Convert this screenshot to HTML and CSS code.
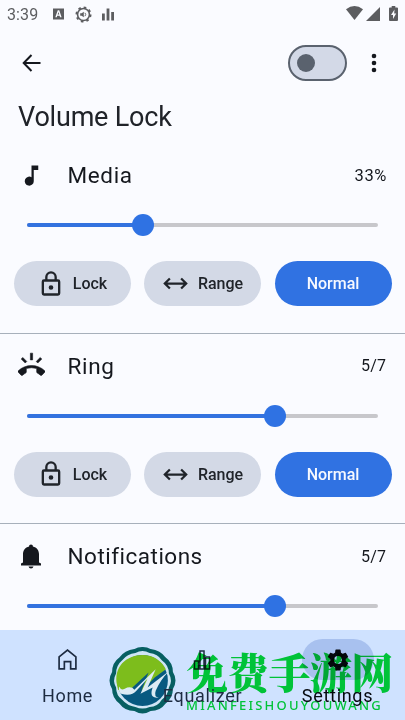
FILE: index.html
```html
<!DOCTYPE html>
<html lang="en">
<head>
<meta charset="utf-8">
<title>Volume Lock</title>
<link rel="stylesheet" href="styles.css">
</head>
<body>
<svg class="defs" aria-hidden="true">
  <symbol id="lock" viewBox="0 0 24 24"><path d="M18 8h-1V6A5 5 0 0 0 7 6v2H6a2 2 0 0 0-2 2v10a2 2 0 0 0 2 2h12a2 2 0 0 0 2-2V10a2 2 0 0 0-2-2zM9 6a3 3 0 0 1 6 0v2H9zm9 14H6V10h12zm-6-3a2 2 0 1 0 0-4 2 2 0 0 0 0 4z"/></symbol>
  <symbol id="range" viewBox="0 0 24 24"><path d="M3 12h18M7 7.500 2.500 12 7 16.500M17 7.500l4.500 4.500-4.500 4.500" fill="none" stroke="currentColor" stroke-width="2"/></symbol>
  <symbol id="gear" viewBox="0 0 24 24"><path d="M19.140 12.940c.040-.300.060-.610.060-.940s-.020-.640-.070-.940l2.030-1.580a.490.490 0 0 0 .120-.610l-1.920-3.320a.490.490 0 0 0-.590-.220l-2.390.960a7 7 0 0 0-1.620-.940l-.360-2.540a.480.480 0 0 0-.480-.410h-3.840a.470.470 0 0 0-.470.410l-.360 2.540a7.400 7.400 0 0 0-1.620.940l-2.390-.960a.480.480 0 0 0-.590.220L2.740 8.870a.470.470 0 0 0 .120.610l2.030 1.580a6 6 0 0 0 0 1.880l-2.030 1.580a.490.490 0 0 0-.120.610l1.920 3.320c.120.220.370.290.590.220l2.390-.960c.500.380 1.030.700 1.620.940l.360 2.540c.050.240.240.410.480.410h3.840c.240 0 .440-.170.470-.410l.360-2.540a7.400 7.400 0 0 0 1.620-.940l2.390.960c.220.080.470 0 .590-.220l1.920-3.320a.470.470 0 0 0-.120-.610zM12 15.600a3.600 3.600 0 1 1 0-7.200 3.600 3.600 0 0 1 0 7.200z"/></symbol>
</svg>

<header class="status">
  <span class="time">3:39</span>
  <svg class="app-a" viewBox="0 0 12 12"><path fill-rule="evenodd" d="M0 0h12v12H0zM5.200 2 2.500 9.500h1.700l.4-1.500h2.600l.5 1.500h1.700L6.800 2zM6 3.800l.8 2.700H5.100z"/></svg>
  <svg class="app-gear" viewBox="0 0 18 18"><circle cx="9" cy="9" r="6.300" fill="none" stroke="currentColor" stroke-width="1.700"/><circle cx="9" cy="9" r="7.500" fill="none" stroke="currentColor" stroke-width="2" stroke-dasharray="2.700 3.190"/><path d="M5.500 7.700h1.600L9.300 6v6L7.100 10.300H5.500z"/><path d="M10.500 7.200q1.700 1.800 0 3.600" fill="none" stroke="currentColor"/></svg>
  <svg class="app-bars" viewBox="0 0 12 12"><path d="M0 5h2.800v7H0zM4.600 0h2.800v12H4.600zM9.200 3.500H12V12H9.200z"/></svg>
  <span class="spacer"></span>
  <svg class="wifi" viewBox="0 0 17 14"><path d="M0 3.200Q8.500-3 17 3.200L8.500 14z"/></svg>
  <svg class="signal" viewBox="0 0 14 14"><path d="M14 0v14H0z"/></svg>
  <svg class="battery" viewBox="0 0 9 15"><path fill-rule="evenodd" d="M2.700 0h3.600v1.500H8a1 1 0 0 1 1 1V14a1 1 0 0 1-1 1H1a1 1 0 0 1-1-1V2.500a1 1 0 0 1 1-1h1.700zM5.500 3.500 2 9h2v4l3.200-5.500h-2z"/></svg>
</header>

<div class="toolbar">
  <svg class="back" viewBox="0 0 18 18"><path d="M18 9H1.500M9 1 1.200 9 9 17" fill="none" stroke="currentColor" stroke-width="2"/></svg>
  <span class="spacer"></span>
  <span class="switch"><i></i></span>
  <svg class="more" viewBox="0 0 6 20"><circle cx="3" cy="3" r="2.300"/><circle cx="3" cy="10" r="2.300"/><circle cx="3" cy="17" r="2.300"/></svg>
</div>
<h1>Volume Lock</h1>

<main>
  <section>
    <div class="row">
      <svg class="icon" viewBox="0 0 24 24"><path d="M12 3v10.550A4 4 0 1 0 14 17V7h4V3z"/></svg>
      <h2>Media</h2><span class="value percent">33%</span>
    </div>
    <div class="slider media"><i class="fill"></i><i class="thumb"></i></div>
    <div class="buttons">
      <button><svg class="lock"><use href="#lock"/></svg>Lock</button>
      <button><svg class="range"><use href="#range"/></svg>Range</button>
      <button class="active">Normal</button>
    </div>
  </section>
  <section>
    <div class="row">
      <svg class="icon ring" viewBox="0 0 24 24"><path d="M23.710 16.670C20.660 13.780 16.540 12 12 12S3.340 13.780.290 16.670a1 1 0 0 0 0 1.410l2.480 2.480c.180.180.430.290.710.290.270 0 .520-.110.700-.280.790-.740 1.690-1.360 2.660-1.850.330-.160.560-.500.560-.900v-3.100a15.600 15.600 0 0 1 9.200 0v3.100c0 .390.230.740.560.900.980.490 1.870 1.120 2.670 1.850.180.180.430.280.700.280.280 0 .530-.110.710-.290l2.480-2.480a1 1 0 0 0-.010-1.410zM21.160 6.260l-1.410-1.410-3.560 3.550 1.410 1.410zM13 1h-2v6h2zM6.400 9.810 7.810 8.400 4.260 4.840 2.840 6.260z" stroke="currentColor" stroke-width=".5"/></svg>
      <h2>Ring</h2><span class="value">5/7</span>
    </div>
    <div class="slider level"><i class="fill"></i><i class="thumb"></i></div>
    <div class="buttons">
      <button><svg class="lock"><use href="#lock"/></svg>Lock</button>
      <button><svg class="range"><use href="#range"/></svg>Range</button>
      <button class="active">Normal</button>
    </div>
  </section>
  <section class="last">
    <div class="row">
      <svg class="icon bell" viewBox="0 0 20 24"><path d="M10 0c1.100 0 1.900.7 1.900 1.900C15.800 2.700 18 5.700 18 9.500V18l2 1v2H0v-2l2-1V9.500c0-3.800 2.200-6.800 6.100-7.600C8.100.7 8.900 0 10 0zM7.500 22h5q-.5 2-2.500 2t-2.500-2z"/></svg>
      <h2 class="long">Notifications</h2><span class="value">5/7</span>
    </div>
    <div class="slider level"><i class="fill"></i><i class="thumb"></i></div>
  </section>
</main>

<nav>
  <div class="tab"><span class="pill"><svg class="home" viewBox="0 0 18 20"><path d="M1 7.500 9 1l8 6.500V19h-5v-7H6v7H1z" fill="none" stroke="currentColor" stroke-width="1.600"/></svg></span><span class="label">Home</span></div>
  <div class="tab"><span class="pill"><svg class="equalizer" viewBox="0 0 18 20"><path d="M1 11h4v8H1zM6.500 1h4v18h-4zM12 7h4v12h-4z" fill="none" stroke="currentColor" stroke-width="1.500"/></svg></span><span class="label">Equalizer</span></div>
  <div class="tab selected"><span class="pill"><svg class="gear"><use href="#gear"/></svg></span><span class="label">Settings</span></div>
</nav>

<div class="brand">
  <svg class="emblem" viewBox="0 0 66 66">
    <path d="M25 3Q33-1 41 3 50 4 55 11 62 16 62 25 67 33 62 41 62 50 55 55 50 62 41 62 33 67 25 62 16 62 11 55 4 50 4 41-1 33 4 25 4 16 11 11 16 4 25 3z" fill="#075f62" stroke="#075f62" stroke-width="2"/>
    <path d="M26 6Q33 2 40 6 48 7 52 13 59 18 59 26 63 33 59 40 58 48 52 52 48 59 40 59 33 62 26 59 18 58 13 52 7 48 7 40 3 33 7 26 7 18 13 13 18 7 26 6z" fill="#cfe5f5"/>
    <circle cx="33" cy="33" r="25" fill="#075980"/>
    <path d="M8 38C4 20 17 8 33 8c11 0 19 6 23 14L45 30 32 43 39 25 22 41Q15 47 9 42z" fill="#7dbd1c"/>
    <path d="M10 39q2 5 8 1 5-1 7 2L46 22 38 40 59 24Q51 32 46 43q-2 6 3 7-10 1-6-10L31 46 38 31 27 43Q22 49 12 46 9 44 10 39z" fill="#dcebf4"/>
  </svg>
</div>
<div class="wordmark"><span class="hanzi" lang="zh-CN">免费手游网</span><span class="pinyin">MIANFEISHOUYOUWANG</span></div>
</body>
</html>
```
FILE: styles.css
```css
* { box-sizing: border-box; }
body {
  margin: 0; width: 405px; height: 720px; overflow: hidden;
  display: flex; flex-direction: column; position: relative;
  background: #fafbff; color: #15181e; font-family: Roboto, sans-serif;
}
.defs { position: absolute; width: 0; height: 0; }
svg { display: block; flex: none; fill: currentColor; }
.spacer { flex: 1; }

.status { display: flex; align-items: center; height: 28px; padding: 0 7px; color: #5c5d60; flex: none; }
.time { font-size: 16px; width: 46px; letter-spacing: .1px; }
.app-a { width: 11px; height: 12px; }
.app-gear { width: 17px; height: 17px; margin-left: 11px; }
.app-bars { width: 12px; height: 13px; margin-left: 10px; margin-top: 1px; }
.wifi { width: 17px; height: 14px; margin-top: -2px; }
.signal { width: 14px; height: 14px; margin: -1px 0 0 3px; }
.battery { width: 9px; height: 15px; margin: -2px 0 0 9px; }

.toolbar { height: 70px; display: flex; align-items: center; padding: 0 28.500px 0 22px; flex: none; }
.back { width: 19px; height: 18px; }
.switch { width: 59px; height: 36px; border: 2px solid #5a626e; border-radius: 18px; background: #d3d9e7; padding: 7px; }
.switch i { display: block; width: 18px; height: 18px; border-radius: 50%; background: #5a626e; }
.more { width: 6px; height: 20px; margin-left: 24px; }
h1 { margin: 0; height: 45px; padding-left: 18px; font-size: 27px; line-height: 38px; font-weight: 400; flex: none; letter-spacing: -.2px; color: #202329; }

main { flex: 1; overflow: hidden; min-height: 0; }
section { height: 190.500px; border-bottom: 1px solid #a7b0bb; }
.row { height: 64px; display: flex; align-items: center; padding: 0 19px 0 18px; }
.icon { width: 27px; height: 27px; }
.bell { width: 20px; height: 25px; margin: 0 4px 0 3px; }
h2 { margin: 0 0 0 22.500px; flex: 1; font-size: 22.500px; font-weight: 400; letter-spacing: .65px; }
.long { letter-spacing: .5px; }
.value { font-size: 16px; letter-spacing: .1px; }
.percent { font-size: 16.500px; letter-spacing: .6px; margin-right: -1px; }
.slider { height: 36px; margin: 0 27px; display: flex; align-items: center; position: relative; }
.slider::before { content: ""; position: absolute; left: 0; right: 0; top: 16px; height: 4px; border-radius: 2px; background: #c7c7cb; }
.fill { height: 4px; border-radius: 2px; background: #3372df; position: relative; }
.thumb { width: 22px; height: 22px; border-radius: 50%; background: #2f72e3; margin-left: -11px; position: relative; }
.media .fill { width: 33.100%; }
.level .fill { width: 70.700%; }
.buttons { display: grid; grid-template-columns: repeat(3, 1fr); gap: 13.500px; padding: 18px 13.500px 0; }
button { height: 45px; border: 0; border-radius: 23px; padding: 0; background: #d3d9e6; color: #20242a; font: 500 16px Roboto, sans-serif; display: flex; align-items: center; justify-content: center; }
.active { background: #3072e2; color: #f7f9ff; }
.lock { width: 28px; height: 28px; margin-right: 8px; }
.range { width: 27px; height: 27px; margin-right: 9px; }
.last { border: 0; }

nav { height: 90px; display: grid; grid-template-columns: repeat(3, 1fr); flex: none; background: #cfe2ff; color: #1d2b41; }
.tab { display: flex; flex-direction: column; align-items: center; padding-top: 9px; font-size: 18px; line-height: 22px; letter-spacing: .7px; }
.label { position: relative; z-index: 2; }
.pill { width: 72px; height: 41px; border-radius: 21px; display: flex; align-items: center; justify-content: center; margin-bottom: 5px; }
.selected { color: #05080e; }
.selected .pill { background: #a8c1ef; }
.home { width: 19px; height: 21px; }
.equalizer { width: 19px; height: 20px; }
.gear { width: 26px; height: 26px; }

.brand { position: absolute; left: 109px; top: 647px; }
.emblem { width: 67px; height: 67px; }
.wordmark { position: absolute; left: 186px; top: 646px; mix-blend-mode: multiply; display: flex; flex-direction: column; color: #00dc38; white-space: nowrap; }
.hanzi { font: 900 42px/50px "Noto Serif CJK SC", "Noto Sans CJK SC", serif; letter-spacing: -.7px; }
.pinyin { font: 500 13px/14px "Noto Sans", sans-serif; letter-spacing: 2.200px; margin-top: 2px; }
```
